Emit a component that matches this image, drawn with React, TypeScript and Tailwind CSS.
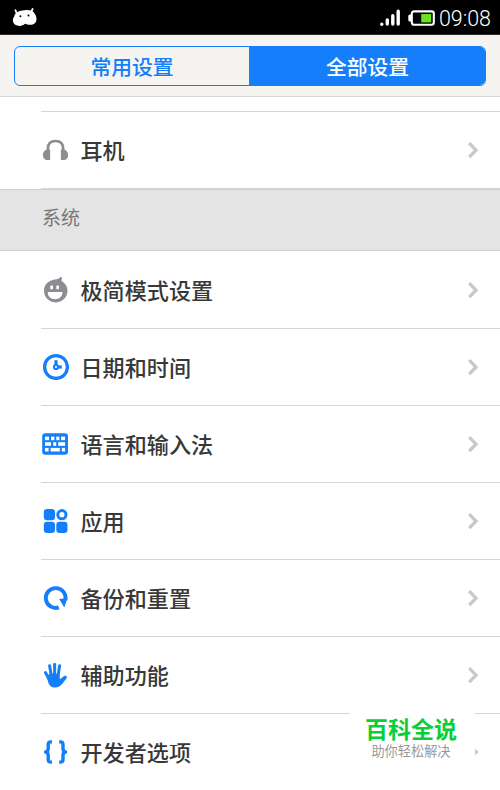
import type { ReactNode } from "react";

type SettingItem = {
  id: string;
  label: string;
  icon: ReactNode;
};

const BLUE = "#147efb";
const GRAY = "#8b8d91";

function HeadphoneIcon() {
  return (
    <svg width="28" height="28" viewBox="-0.5 0 28 28" fill={GRAY}>
      <path
        d="M6.4 16V12.5C6.4 7.6 9.4 5 14 5S21.6 7.6 21.6 12.5V16"
        fill="none"
        stroke={GRAY}
        strokeWidth="2.7"
      />
      <path d="M8.6 13.4V24H6.2C3.3 24 1.4 21.8 1.4 18.9S3.4 13.6 6.2 13.4Z" />
      <path d="M19.4 13.4V24H21.8C24.7 24 26.6 21.8 26.6 18.9S24.6 13.6 21.8 13.4Z" />
    </svg>
  );
}

function FaceIcon() {
  return (
    <svg width="28" height="28" viewBox="-0.7 0 28 28">
      <path
        d="M18.8 .8L20 1.2C20.4 3 20.1 4.2 19.6 5.1C23.4 7 25.8 10.5 25.8 14.6C25.8 21.2 20.6 26.4 14 26.4S2.3 21.2 2.3 14.6C2.3 8.4 7.3 4.2 13 3.5C15.5 3.2 17.9 2.8 18.8 .8Z"
        fill={GRAY}
      />
      <rect x="8.6" y="9.4" width="2.7" height="3.8" rx=".7" fill="#fff" />
      <rect x="14.6" y="9.4" width="2.7" height="3.8" rx=".7" fill="#fff" />
      <path
        d="M6.9 16H19.8C20.6 16 20.9 16.4 20.8 17.1C20.3 20.9 17.5 23.2 13.4 23.2S6.4 20.9 6 17.1C5.9 16.4 6.2 16 6.9 16Z"
        fill="#fff"
      />
    </svg>
  );
}

function ClockIcon() {
  return (
    <svg width="28" height="28" viewBox="-1 0 28 28" fill="none" stroke={BLUE}>
      <circle cx="14" cy="14" r="11.4" strokeWidth="3.3" />
      <path d="M14 7.2V12.4" strokeWidth="3.2" />
      <path d="M15.5 14H19.8" strokeWidth="3.2" />
      <circle cx="14" cy="14" r="2.1" strokeWidth="2" />
    </svg>
  );
}

function KeyboardIcon() {
  return (
    <svg width="28" height="28" viewBox="0 0 28 28">
      <rect x="1.2" y="3.2" width="25.8" height="21.6" rx="3.2" fill={BLUE} />
      <g fill="#fff">
        <rect x="4" y="6.6" width="4" height="3.6" />
        <rect x="10" y="6.6" width="3.4" height="3.6" />
        <rect x="15.2" y="6.6" width="3.2" height="3.6" />
        <rect x="20.1" y="6.6" width="4" height="3.6" />
        <rect x="4" y="12.2" width="6" height="3.6" />
        <rect x="12.2" y="12.2" width="3" height="3.6" />
        <rect x="17.2" y="12.2" width="6.9" height="3.6" />
        <rect x="4" y="17.9" width="3.6" height="3.6" />
        <rect x="9.6" y="17.9" width="9.2" height="3.6" />
        <rect x="20.8" y="17.9" width="3.3" height="3.6" />
      </g>
    </svg>
  );
}

function AppsIcon() {
  return (
    <svg width="28" height="28" viewBox="-0.4 0 28 28" fill={BLUE}>
      <rect x="2.4" y="2" width="11.2" height="11.2" rx="3.2" />
      <circle cx="20.5" cy="7.7" r="4.1" fill="none" stroke={BLUE} strokeWidth="3" />
      <rect x="2.4" y="14.7" width="11.2" height="11.2" rx="3.2" />
      <rect x="14.9" y="14.7" width="11.2" height="11.2" rx="3.2" />
    </svg>
  );
}

function ResetIcon() {
  return (
    <svg width="28" height="28" viewBox="0 0 28 28" fill={BLUE}>
      <path
        d="M17.8 23.4A9.9 9.9 0 1 1 24.4 16"
        fill="none"
        stroke={BLUE}
        strokeWidth="3.9"
      />
      <path d="M18.2 15L26.4 14.2L23.3 23.4Z" />
    </svg>
  );
}

function HandIcon() {
  return (
    <svg width="28" height="28" viewBox="0 0 28 28" fill={BLUE}>
      <g fill="none" stroke={BLUE} strokeLinecap="round" strokeWidth="3">
        <path d="M4.4 11.6L8 18" />
        <path d="M8.6 4.7L10.4 15" />
        <path d="M13.6 3.2V14" />
        <path d="M18.6 4.7L17 15" />
        <path d="M24.2 16.3L19 21.4" strokeWidth="3.2" />
      </g>
      <path d="M5.8 15L9 12.6L18.4 12.8L18.9 18.2L23 15.2L25.4 17.4C22.6 20.8 20 26.2 14.2 26.6C8.2 27 6.8 21 5.8 15Z" />
    </svg>
  );
}

function BracesIcon() {
  return (
    <svg
      width="28"
      height="28"
      viewBox="0 0 28 28"
      fill="none"
      stroke={BLUE}
      strokeWidth="3.4"
      strokeLinejoin="round"
    >
      <path d="M11 3.9H9.8Q7.2 3.9 7.2 6.5V10.8Q7.2 13.4 4.6 14Q7.2 14.6 7.2 17.2V21.5Q7.2 24.1 9.8 24.1H11" />
      <path d="M18.2 3.9H19.4Q22 3.9 22 6.5V10.8Q22 13.4 24.6 14Q22 14.6 22 17.2V21.5Q22 24.1 19.4 24.1H18.2" />
    </svg>
  );
}

const systemItems: SettingItem[] = [
  { id: "simple-mode", label: "极简模式设置", icon: <FaceIcon /> },
  { id: "date-time", label: "日期和时间", icon: <ClockIcon /> },
  { id: "language", label: "语言和输入法", icon: <KeyboardIcon /> },
  { id: "apps", label: "应用", icon: <AppsIcon /> },
  { id: "backup", label: "备份和重置", icon: <ResetIcon /> },
  { id: "accessibility", label: "辅助功能", icon: <HandIcon /> },
  { id: "developer", label: "开发者选项", icon: <BracesIcon /> },
];

function StatusBar() {
  return (
    <div className="flex h-[35px] items-center border-b border-[#2d2b2b] bg-black pr-2 pl-3 text-white">
      <svg width="26" height="20" viewBox="0 0 26 20" fill="#fff">
        <path
          d="M4.6 6L3.4 3.2M19 5L20.6 2"
          stroke="#fff"
          strokeWidth="1.8"
          strokeLinecap="round"
        />
        <path d="M12.5 3.2C17.5 2.8 21.2 3.7 22.6 6.4C25.6 10.5 25.2 16 20.8 17.4C17.7 18.2 14.8 17.5 13 16.8C10.7 19.2 6.2 19.6 3.2 17.8C.2 15.7.4 12 2.2 9.6C2.6 5.4 7.2 3.5 12.5 3.2Z" />
        <circle cx="8.4" cy="9.2" r="1" fill="#000" />
        <circle cx="16.5" cy="8.5" r="1" fill="#000" />
      </svg>
      <svg className="ml-auto" width="22" height="18" viewBox="0 0 22 18">
        <g stroke="#fff" strokeWidth="3.4" strokeLinecap="round">
          <path d="M2.8 16.2V16.3M8.3 12V16M13.8 7.8V16M19.2 3.2V16" />
        </g>
      </svg>
      <svg className="ml-[7px]" width="28" height="18" viewBox="0 0 28 18">
        <rect x=".3" y="6.6" width="4" height="7" rx="1.5" fill="#fff" />
        <rect
          x="3.8"
          y="3.4"
          width="22"
          height="13.4"
          rx="2.2"
          fill="#000"
          stroke="#fff"
          strokeWidth="2.1"
        />
        <rect x="13.2" y="6" width="10" height="8.4" fill="#6be31b" />
      </svg>
      <span className="ml-[3px] w-[53px] pt-1 font-[Roboto] text-[21.4px] leading-6 font-light whitespace-nowrap">
        09:08
      </span>
    </div>
  );
}

function SettingRow({ item, last }: { item: SettingItem; last?: boolean }) {
  return (
    <button
      type="button"
      className={`ml-[41px] flex w-[459px] items-center text-left ${
        last ? "h-[76px]" : "h-[77px] border-b border-[#d6d6d6]"
      }`}
    >
      {item.icon}
      <span className="ml-[11.5px] pb-0.5 text-[22.1px] leading-8 font-medium text-[#383838]">
        {item.label}
      </span>
      {!last && (
        <svg
          className="mr-[21px] ml-auto"
          width="14"
          height="20"
          viewBox="0 0 14 20"
          fill="none"
          stroke="#c8c8c8"
          strokeWidth="3.3"
        >
          <path d="M4.2 3.2L11 10.2L4.2 17.2" />
        </svg>
      )}
    </button>
  );
}

export default function App() {
  return (
    <div className="relative h-[790px] w-[500px] overflow-hidden bg-white font-['Noto_Sans_CJK_SC',sans-serif]">
      <StatusBar />

      {/* Tabs */}
      <div className="h-[62px] border-b border-[#d9d8d5] bg-[#f6f4f1] px-3.5 pt-[11px]">
        <div className="flex h-10 overflow-hidden rounded-md border border-[#147efb] text-[20.8px] leading-none font-medium">
          <button
            type="button"
            className="flex w-[234px] items-center justify-center text-[#147efb]"
          >
            常用设置
          </button>
          <button
            type="button"
            className="flex flex-1 items-center justify-center bg-[#147efb] pl-px text-white"
          >
            全部设置
          </button>
        </div>
      </div>

      {/* Settings list */}
      <div className="ml-[41px] h-[15px] border-b border-[#d6d6d6]" />
      <SettingRow
        item={{ id: "headset", label: "耳机", icon: <HeadphoneIcon /> }}
      />
      <div className="flex h-[62px] items-start border-y border-[#d0d0d0] bg-[#e4e4e4] pt-[13px] pl-[42px] text-[19px] leading-7 text-[#777]">
        系统
      </div>
      <div className="pt-px">
        {systemItems.map((item, index) => (
          <SettingRow
            key={item.id}
            item={item}
            last={index === systemItems.length - 1}
          />
        ))}
      </div>

      {/* Brand overlay */}
      <div className="absolute top-[704px] left-[350px] flex h-[82px] w-[125px] flex-col items-center bg-white pt-[9px] pr-[3px]">
        <span className="text-[23px] leading-[30px] font-bold whitespace-nowrap text-[#08cf35]">
          百科全说
        </span>
        <span className="mt-px text-[13.2px] leading-[14px] whitespace-nowrap text-[#999]">
          助你轻松解决
        </span>
      </div>
      <svg
        className="absolute top-[748px] left-[475px]"
        width="4"
        height="8"
        viewBox="0 0 4 8"
        fill="#c8c8c8"
      >
        <path d="M0 .8L3.5 4L0 7.2Z" />
      </svg>
    </div>
  );
}
